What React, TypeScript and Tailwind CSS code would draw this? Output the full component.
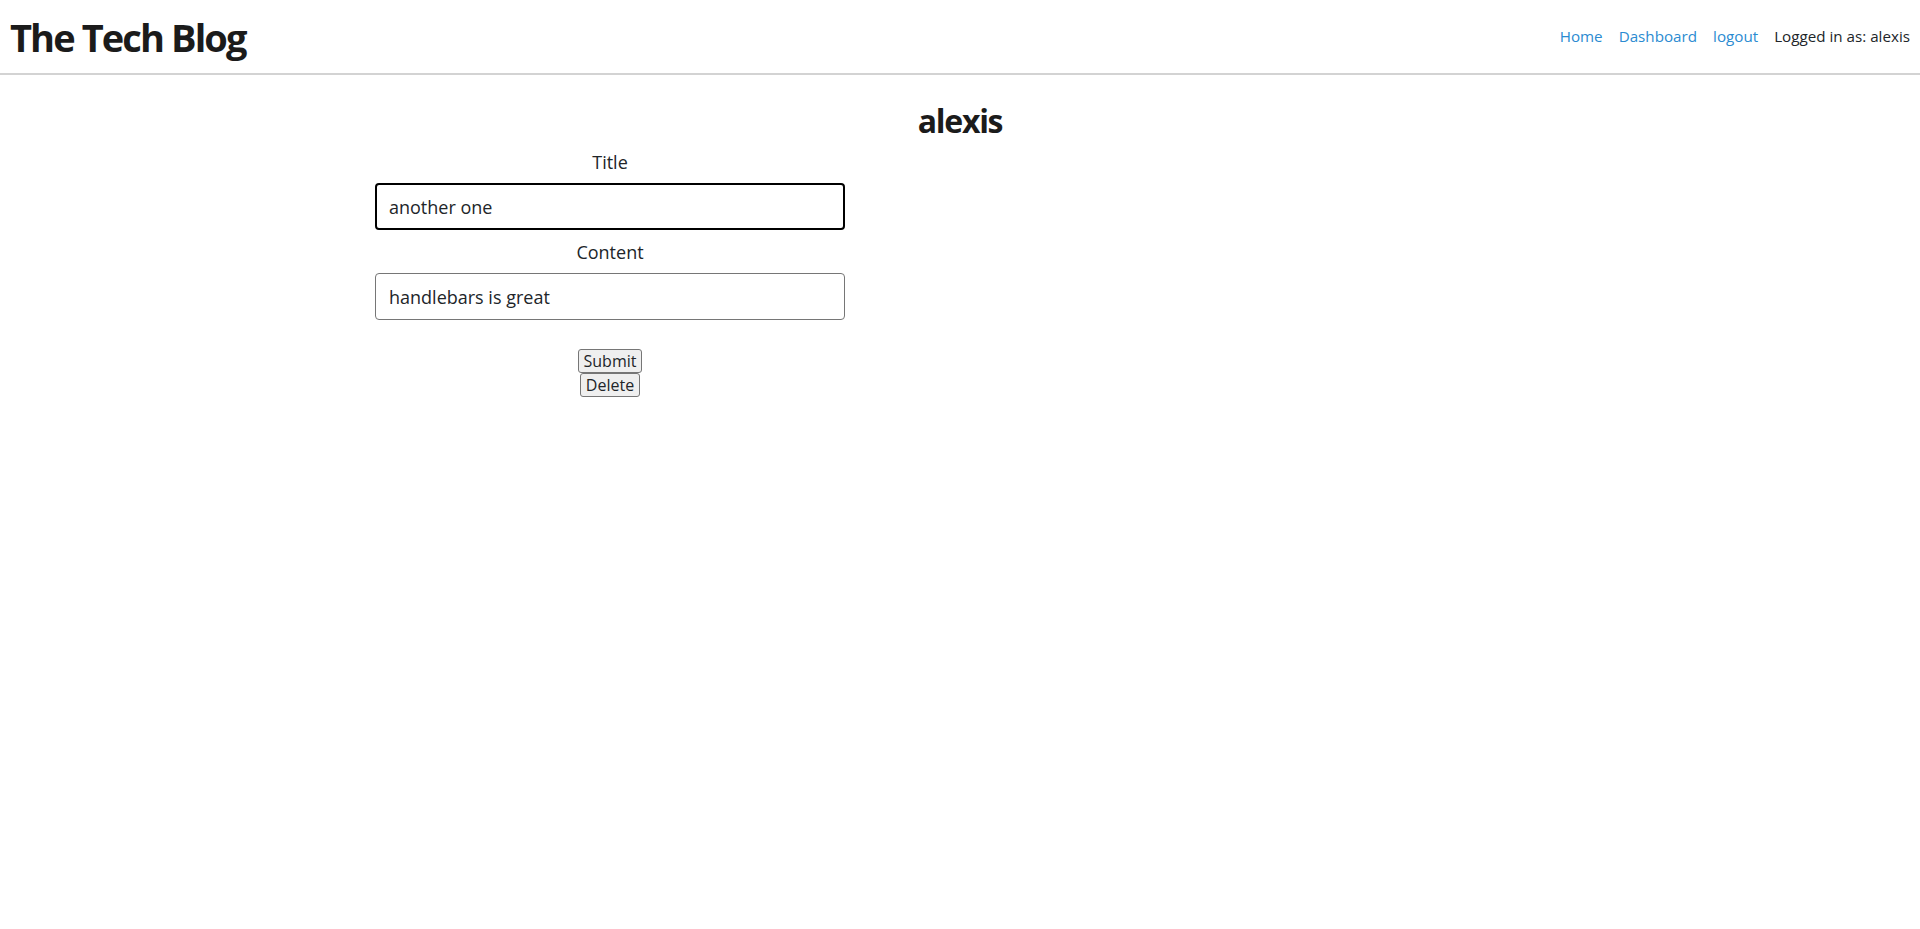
import { useEffect, useRef } from 'react';

export default function App() {
  const titleRef = useRef<HTMLInputElement>(null);

  useEffect(() => {
    const el = titleRef.current;
    if (el) {
      el.focus();
      el.setSelectionRange(el.value.length, el.value.length);
    }
  }, []);

  return (
    <div className="min-h-screen bg-white text-[#212529] font-['Open_Sans',sans-serif]">
      <header className="flex items-center justify-between h-[75px] border-b-2 border-[#d3d3d3]">
        <h1 className="pl-[10px] text-[38px] font-bold tracking-[-0.05em] text-[#1b1b1b] leading-none">
          The Tech Blog
        </h1>
        <nav className="flex items-center gap-4 pr-[10px] text-[15.2px]">
          <a href="#" className="text-[#2b8bd1]">Home</a>
          <a href="#" className="text-[#2b8bd1]">Dashboard</a>
          <a href="#" className="text-[#2b8bd1]">logout</a>
          <span>Logged in as: alexis</span>
        </nav>
      </header>

      <main className="w-[1170px] mx-auto pt-[27px]">
        <h2 className="text-center text-[32px] font-bold leading-[38px] tracking-[-0.04em] text-[#1b1b1b]">
          alexis
        </h2>
        <form className="w-[470px] text-[18px]" onSubmit={(e) => e.preventDefault()}>
          <label htmlFor="title" className="block text-center leading-[27px] mt-[9px] mb-[7px]">
            Title
          </label>
          <input
            id="title"
            ref={titleRef}
            defaultValue="another one"
            className="block w-full h-[47px] px-[12px] border-2 border-black rounded-[4px] outline-none"
          />
          <label htmlFor="content" className="block text-center leading-[27px] mt-[9px] mb-[7px]">
            Content
          </label>
          <input
            id="content"
            defaultValue="handlebars is great"
            className="block w-full h-[47px] px-[13px] border border-[#767676] rounded-[4px] outline-none"
          />
          <div className="flex flex-col items-center mt-[29px] text-[16px]">
            <button
              type="submit"
              className="px-[5px] py-px leading-[20px] bg-[#efefef] border border-[#767676] rounded-[3px]"
            >
              Submit
            </button>
            <button
              type="button"
              className="px-[5px] py-px leading-[20px] bg-[#efefef] border border-[#767676] rounded-[3px]"
            >
              Delete
            </button>
          </div>
        </form>
      </main>
    </div>
  );
}
